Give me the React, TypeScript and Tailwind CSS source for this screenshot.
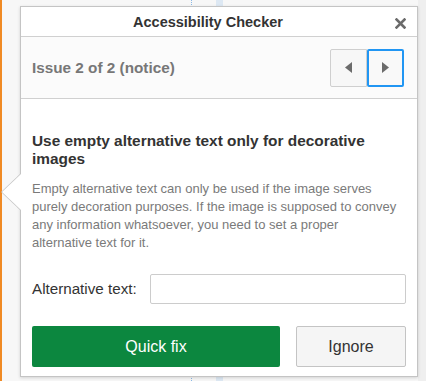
function Triangle({ dir }: { dir: "left" | "right" }) {
  return (
    <svg width="7" height="11" viewBox="0 0 7 11">
      {dir === "left" ? <path d="M7 0 L0 5.5 L7 11 Z" fill="#6b6b6b" /> : <path d="M0 0 L7 5.5 L0 11 Z" fill="#6b6b6b" />}
    </svg>
  );
}

export default function App() {
  return (
    <div className="relative h-[381px] w-[426px] overflow-hidden bg-[#f7f7f7] font-['Liberation_Sans',Arial,sans-serif]">
      {/* editor background bits */}
      <div className="absolute left-0 top-0 h-full w-[2px] bg-[#f08a24]" />
      <div className="absolute left-[191px] top-0 h-full border-l border-dotted border-[#8cb9e6]" />
      <div className="absolute left-[216px] top-0 h-full w-[7px] bg-[#dde8f3]" />
      <div className="absolute right-0 top-0 h-full w-[8px] bg-[#efefef]" />

      <div className="relative pl-[20px] pt-[6px]">
        <div className="relative w-[398px] h-[371px] border border-[#c4c4c4] bg-white shadow-[0_1px_3px_rgba(0,0,0,0.15)] text-[#333]">
          {/* arrow */}
          <div className="absolute left-[-20px] top-[166px] h-0 w-0 border-y-[19px] border-r-[20px] border-y-transparent border-r-[#c4c4c4]" />
          <div className="absolute left-[-19px] top-[167px] h-0 w-0 border-y-[18px] border-r-[19px] border-y-transparent border-r-white" />

          <div className="flex h-[30px] items-center justify-center border-b border-[#d0d0d0] pr-[22px] pt-[2px]">
            <span className="text-[14.5px] font-bold">Accessibility Checker</span>
            <svg className="absolute right-[11px] top-[11px]" width="11" height="11" viewBox="0 0 11 11">
              <path d="M1.5 1.5 L9.5 9.5 M9.5 1.5 L1.5 9.5" stroke="#6b6b6b" strokeWidth="2.6" strokeLinecap="square" />
            </svg>
          </div>

          <div className="flex h-[62px] items-center justify-between border-b border-[#d0d0d0] bg-[#fbfbfb] pl-[11px] pr-[13px]">
            <span className="pt-[1px] text-[15.3px] font-bold text-[#777]">Issue 2 of 2 (notice)</span>
            <div className="flex">
              <button className="flex h-[38px] w-[37px] items-center justify-center rounded-l-[2px] border border-[#cfcfcf] bg-[#f7f7f7]">
                <Triangle dir="left" />
              </button>
              <button className="flex h-[38px] w-[37px] items-center justify-center rounded-[2px] border-2 border-[#2196f3] bg-[#f9f9f9]">
                <Triangle dir="right" />
              </button>
            </div>
          </div>

          <div className="px-[11px] pt-[33px]">
            <h2 className="text-[15.4px] font-bold leading-[18px]">Use empty alternative text only for decorative images</h2>
            <p className="mt-[12px] pr-[5px] text-[13px] leading-[18px] text-[#7a7a7a]">
              Empty alternative text can only be used if the image serves purely decoration purposes. If the image is supposed to convey any information whatsoever, you need to set a proper alternative text for it.
            </p>
            <div className="mt-[22px] flex items-center">
              <label className="w-[118px] text-[15.2px] text-[#333]">Alternative text:</label>
              <input type="text" className="h-[30px] flex-1 rounded-[2px] border border-[#cccccc] bg-white outline-none" />
            </div>
            <div className="mt-[22px] flex gap-[16px]">
              <button className="h-[41px] w-[248px] rounded-[2px] bg-[#0c873f] text-[16px] text-white">Quick fix</button>
              <button className="h-[41px] flex-1 rounded-[2px] border border-[#c4c4c4] bg-[#f5f5f5] text-[16px] text-[#333]">Ignore</button>
            </div>
          </div>
        </div>
      </div>
    </div>
  );
}
